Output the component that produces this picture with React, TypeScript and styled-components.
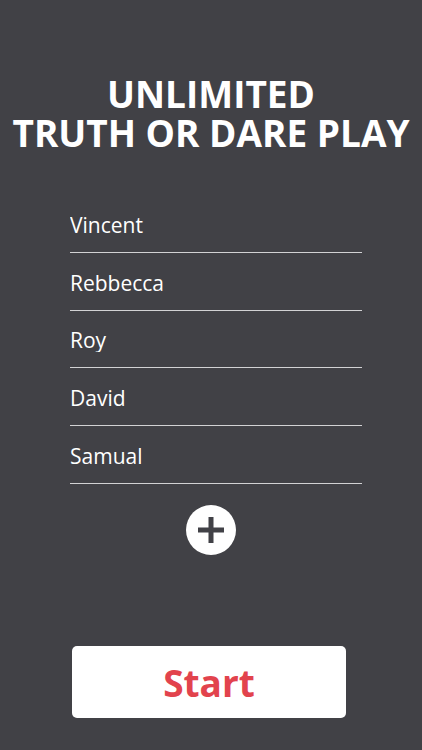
import React from 'react';
import styled, { createGlobalStyle } from 'styled-components';

const GlobalStyle = createGlobalStyle`
  html, body {
    margin: 0;
    padding: 0;
    background: #414146;
  }
  body {
    font-family: "Open Sans", "Liberation Sans", sans-serif;
  }
`;

const Screen = styled.div`
  width: 422px;
  height: 750px;
  background: #414146;
  display: flex;
  flex-direction: column;
  padding-top: 74px;
  box-sizing: border-box;
  overflow: hidden;
`;

const Title = styled.h1`
  margin: 0;
  color: #ffffff;
  font-size: 37px;
  font-weight: 700;
  text-align: center;
  display: flex;
  flex-direction: column;
`;

const TitleLine = styled.span`
  display: block;
  height: 39px;
  line-height: 39px;
`;

const PlayerList = styled.div`
  margin: 43px 0 0 70px;
  width: 292px;
  display: flex;
  flex-direction: column;
`;

const PlayerRow = styled.div`
  height: 57.75px;
  box-sizing: border-box;
  display: flex;
  align-items: flex-end;
  padding-bottom: 15px;
  border-bottom: 1.5px solid #d2d2d4;
`;

const NameInput = styled.input`
  background: transparent;
  border: none;
  outline: none;
  padding: 0;
  width: 100%;
  color: #ffffff;
  font-family: "Open Sans", "Liberation Sans", sans-serif;
  font-size: 21px;
  line-height: 24px;
  height: 24px;
`;

const AddButton = styled.button`
  align-self: center;
  margin-top: 21px;
  width: 50px;
  height: 50px;
  border-radius: 50%;
  border: none;
  background: #ffffff;
  display: flex;
  align-items: center;
  justify-content: center;
  padding: 0;
  cursor: pointer;
`;

const StartButton = styled.button`
  margin: auto 0 32px 72px;
  width: 274px;
  height: 72px;
  border: none;
  border-radius: 5px;
  background: #ffffff;
  color: #e2434d;
  font-family: "Open Sans", "Liberation Sans", sans-serif;
  font-size: 37px;
  font-weight: 700;
  padding: 0;
  cursor: pointer;
`;

const players = ['Vincent', 'Rebbecca', 'Roy', 'David', 'Samual'];

export default function App() {
  return (
    <>
      <GlobalStyle />
      <Screen>
        <Title>
          <TitleLine>UNLIMITED</TitleLine>
          <TitleLine>TRUTH OR DARE PLAY</TitleLine>
        </Title>
        <PlayerList>
          {players.map((name) => (
            <PlayerRow key={name}>
              <NameInput defaultValue={name} />
            </PlayerRow>
          ))}
        </PlayerList>
        <AddButton aria-label="Add player">
          <svg width="26" height="26" viewBox="0 0 26 26">
            <rect x="10.5" y="0" width="5" height="26" fill="#414146" />
            <rect x="0" y="10.5" width="26" height="5" fill="#414146" />
          </svg>
        </AddButton>
        <StartButton>Start</StartButton>
      </Screen>
    </>
  );
}
